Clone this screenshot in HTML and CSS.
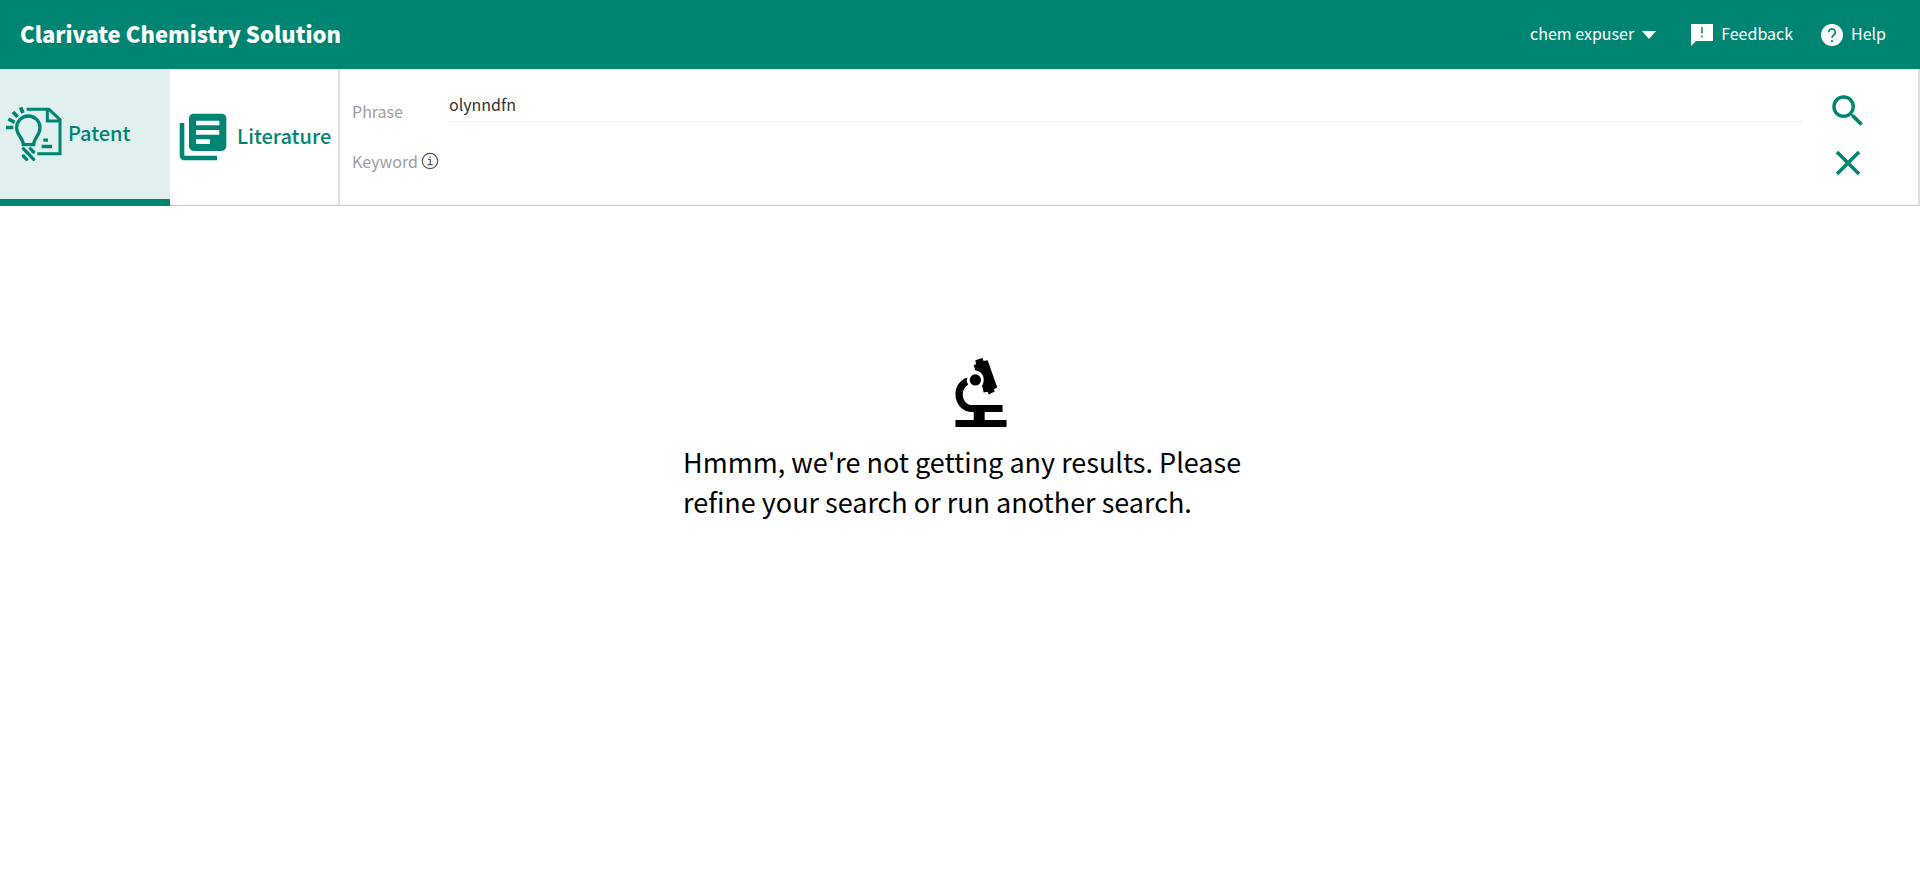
FILE: index.html
```html
<!DOCTYPE html>
<html lang="en">
<head>
<meta charset="utf-8">
<title>Clarivate Chemistry Solution</title>
<link rel="stylesheet" href="styles.css">
</head>
<body>
<header class="topbar">
  <h1 class="brand">Clarivate Chemistry Solution</h1>
  <nav class="topnav">
    <button class="nav-item user" type="button"><span class="nav-text">chem expuser</span>
      <svg class="caret" viewBox="0 0 14 8"><path d="M0 0h14L7 8z" fill="currentColor"/></svg>
    </button>
    <button class="nav-item feedback" type="button">
      <svg class="nav-icon" viewBox="0 0 22 22"><path d="M0 0h22v17H5l-5 5z" fill="currentColor"/><path d="M11 3v6.500M11 11.500v2" stroke="#008573" stroke-width="1.500"/></svg>
      <span class="nav-text">Feedback</span>
    </button>
    <a class="nav-item" href="#help">
      <svg class="nav-icon" viewBox="0 0 22 22"><circle cx="11" cy="11" r="11" fill="currentColor"/><path d="M7.700 8.200a3.300 3.300 0 1 1 5.200 2.700c-1.200.9-1.900 1.400-1.900 3.100M11 16v2" fill="none" stroke="#008573" stroke-width="1.700"/></svg>
      <span class="nav-text">Help</span>
    </a>
  </nav>
</header>

<form class="searchbar">
  <div class="tabs">
    <button class="tab tab-patent active" type="button">
      <svg class="patent-icon" viewBox="18 318 168 168" fill="none" stroke="currentColor">
        <path d="M18 382.500h22M25 357l19 10M39 336l14 15M62 322l7 17" stroke-width="11"/>
        <path d="M70 434h31c0-20 19-28 19-51a35 35 0 0 0-70 0c0 23 20 31 20 51z" stroke-width="10"/>
        <path d="M80 328h67l33 31v102h-68M142 328v35h38" stroke-width="9"/>
        <path d="M130 420.500h14M125 439.500h31" stroke-width="10"/>
        <path d="M70 446l31 32M70 468l10 10M91 446l10 10" stroke-width="10" stroke-linecap="round"/>
      </svg>
      <span class="tab-text">Patent</span>
    </button>
    <button class="tab tab-literature" type="button">
      <svg class="books-icon" viewBox="0 0 24 24"><path fill="currentColor" d="M4 6H2v14c0 1.100.9 2 2 2h14v-2H4V6zm16-4H8c-1.100 0-2 .9-2 2v12c0 1.100.9 2 2 2h12c1.100 0 2-.9 2-2V4c0-1.100-.9-2-2-2zm-1 9H9V9h10v2zm-4 4H9v-2h6v2zm4-8H9V5h10v2z"/></svg>
      <span class="tab-text">Literature</span>
    </button>
  </div>
  <div class="fields">
    <div class="field">
      <label class="label" for="phrase">Phrase</label>
      <input class="input underlined" id="phrase" type="text" value="olynndfn">
    </div>
    <div class="field">
      <label class="label" for="keyword">Keyword
        <svg class="info" viewBox="0 0 18 18" fill="none" stroke="#555"><circle cx="9" cy="9" r="7.700" stroke-width="1.200"/><path d="M7 7.500h2.300v5M6.500 12.700h5.200M8.300 5h1.700" stroke-width="1.200"/></svg>
      </label>
      <input class="input" id="keyword" type="text">
    </div>
  </div>
  <div class="actions">
    <button class="action" type="submit" aria-label="Search">
      <svg class="action-icon" viewBox="0 0 24 24"><path fill="currentColor" d="M15.500 14h-.79l-.28-.27A6.471 6.471 0 0 0 16 9.500 6.500 6.500 0 1 0 9.500 16c1.610 0 3.090-.59 4.230-1.570l.27.28v.79l5 4.990L20.490 19l-4.990-5zm-6 0C7.010 14 5 11.990 5 9.500S7.010 5 9.500 5 14 7.010 14 9.500 11.990 14 9.500 14z"/></svg>
    </button>
    <button class="action" type="reset" aria-label="Clear">
      <svg class="action-icon" viewBox="0 0 24 24"><path fill="currentColor" d="M19 6.410L17.590 5 12 10.590 6.410 5 5 6.410 10.590 12 5 17.590 6.410 19 12 13.410 17.590 19 19 17.590 13.410 12z"/></svg>
    </button>
  </div>
</form>

<main class="empty">
  <svg class="microscope" viewBox="47 38 154 208">
    <path d="M47 225h55v-24h-5C69 201 47 177 47 147c0-23 14-43 36-50l-2 10 4 12c-10 6-16 16-16 28 0 19 12 33 30 33h90v21h-54v24h66v21H47z"/>
    <circle cx="107" cy="104" r="17"/>
    <path d="M107 45l21-7 4 9 12-2 29 82-10 5 2 7-17 9-4-8-12 2-5-20c8-13 7-30-3-39-5-4-10-6-17-7l-5-16 7-3z"/>
  </svg>
  <p class="message">Hmmm, we're not getting any results. Please refine your search or run another search.</p>
</main>
</body>
</html>
```
FILE: styles.css
```css
* { box-sizing: border-box; }
body {
  margin: 0;
  background: #fff;
  color: #000;
  font-family: "Noto Sans CJK SC", "Noto Sans", sans-serif;
  font-size: 16px;
}
button, input { font: inherit; color: inherit; }
button { border: 0; padding: 0; background: none; cursor: pointer; }
svg { display: block; flex: none; }

.topbar {
  display: flex;
  align-items: center;
  justify-content: space-between;
  height: 69px;
  padding: 0 34px 0 20px;
  background: #008573;
  color: #fff;
}
.brand { margin: 0; padding-bottom: 3px; font-size: 22px; line-height: 32px; font-weight: 900; }
.topnav { display: flex; align-items: center; }
.nav-item {
  display: flex;
  align-items: center;
  gap: 8px;
  margin-left: 28px;
  line-height: 24px;
  color: inherit;
  text-decoration: none;
}
.nav-text { padding-bottom: 3px; }
.user { margin-right: 7px; }
.caret { width: 14px; height: 8px; }
.nav-icon { width: 22px; height: 22px; }

.searchbar {
  display: flex;
  height: 137px;
  border-right: 2px solid #e0e0e0;
  border-bottom: 1px solid #c8c8c8;
}
.tabs { display: flex; border-right: 2px solid #e0e0e0; }
.tab {
  display: flex;
  align-items: center;
  height: 137px;
  color: #008573;
  font-size: 20px;
  line-height: 30px;
  font-weight: 500;
}
.tab-text { padding-bottom: 3px; }
.active { background: #e0f0ee; border-bottom: 7px solid #008573; }
.tab-patent { width: 170px; padding-left: 6px; gap: 6px; }
.tab-literature { width: 168px; padding-left: 5px; gap: 6px; }
.patent-icon { width: 56px; height: 56px; }
.books-icon { width: 56px; height: 56px; margin-bottom: 2px; }

.fields { flex: 1; padding: 17px 0 0 12px; }
.field { display: flex; height: 50px; }
.label {
  display: flex;
  align-items: center;
  gap: 3px;
  width: 97px;
  color: #9e9e9e;
  line-height: 24px;
}
.info { width: 18px; height: 18px; }
.input {
  flex: 1;
  height: 36px;
  padding: 0;
  border: 0;
  outline: 0;
  background: none;
  color: #333;
}
.underlined { border-bottom: 1px dotted #e4e4e4; }

.actions {
  display: flex;
  flex-direction: column;
  gap: 10px;
  padding: 21px 49px 0 26px;
  color: #008573;
}
.action { color: inherit; }
.action-icon { width: 42px; height: 42px; }

.empty {
  display: flex;
  flex-direction: column;
  align-items: center;
  padding: 152px 0 0 42px;
}
.microscope { width: 52px; height: 69px; }
.message { width: 596px; margin: 15px 0 0; font-size: 27px; line-height: 40px; font-weight: 400; }
```
